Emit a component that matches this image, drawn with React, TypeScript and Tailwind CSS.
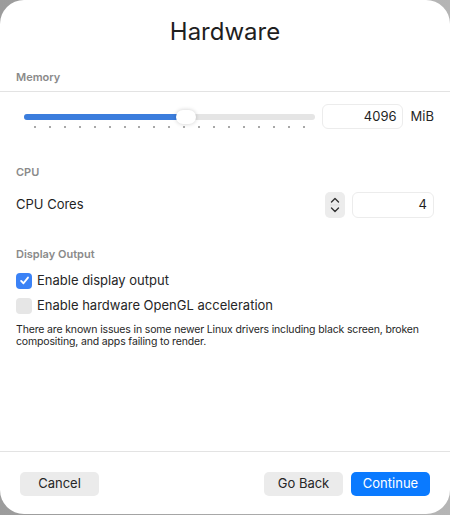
import React, { useState } from "react";

const font = { fontFamily: "Inter, 'Noto Sans', sans-serif" };

const Check = ({ checked, label }: { checked: boolean; label: string }) => (
  <label className="flex items-center gap-[5px] h-[18px] text-[13px] text-[#262626]">
    <span
      className={
        checked
          ? "w-4 h-4 rounded-[4px] bg-[#3b82f6] flex items-center justify-center"
          : "w-4 h-4 rounded-[4px] bg-[#e6e6e6]"
      }
    >
      {checked && (
        <svg width="11" height="11" viewBox="0 0 12 12" fill="none">
          <path d="M2.3 6.4 L4.9 9 L9.8 2.8" stroke="white" strokeWidth="2" strokeLinecap="round" strokeLinejoin="round" />
        </svg>
      )}
    </span>
    {label}
  </label>
);

const SectionTitle = ({ children }: { children: React.ReactNode }) => (
  <div className="text-[11px] font-semibold text-[#8a8a8a] px-4">{children}</div>
);

export default function App() {
  const [mem] = useState(4096);
  const ticks = Array.from({ length: 19 });

  return (
    <div className="w-[450px] h-[515px] bg-gradient-to-r from-[#9c9c9c] to-[#b5b5b5]" style={font}>
      <div className="w-[450px] h-[514px] bg-white rounded-[24px] flex flex-col">
        <h1 className="text-[24px] text-[#1f1f1f] text-center pt-[17px] leading-[30px]">Hardware</h1>

        <div className="mt-[22px]">
          <SectionTitle>Memory</SectionTitle>
          <div className="h-px bg-[#e3e3e3] mt-[5px]" />
        </div>

        {/* memory slider */}
        <div className="flex items-center pl-6 pr-4 mt-[12px]">
          <div className="w-[291px] relative h-[26px]">
            <div className="absolute left-0 right-0 top-[10px] h-[6px] rounded-full bg-[#e5e5e5]" />
            <div className="absolute left-0 w-[162px] top-[10px] h-[6px] rounded-full bg-[#3b7ddd]" />
            <div className="absolute left-[152px] top-[6px] w-[20px] h-[14px] rounded-full bg-white shadow-[0_0_4px_rgba(0,0,0,0.2)]" />
            <div className="absolute left-[10px] right-[10px] top-[22px] flex justify-between">
              {ticks.map((_, i) => (
                <span key={i} className="w-[2px] h-[2px] bg-[#a8a8a8]" />
              ))}
            </div>
          </div>
          <div className="ml-[7px] w-[81px] h-[25px] rounded-[6px] border border-[#ececec] text-[13px] text-[#1f1f1f] flex items-center justify-end pr-[5px]">
            {mem}
          </div>
          <span className="ml-[8px] text-[13px] text-[#262626]">MiB</span>
        </div>

        <div className="mt-[34px]">
          <SectionTitle>CPU</SectionTitle>
        </div>
        <div className="flex items-center px-4 mt-[12px]">
          <span className="text-[13px] text-[#1f1f1f] flex-1">CPU Cores</span>
          <div className="w-[20px] h-[26px] rounded-[5px] bg-[#ececec] flex flex-col items-center justify-center">
            <svg width="12" height="22" viewBox="0 0 12 22" fill="none">
              <path d="M2.5 8 L6 4.5 L9.5 8" stroke="#333" strokeWidth="1.4" strokeLinecap="round" strokeLinejoin="round" />
              <path d="M1 11 H11" stroke="#dcdcdc" strokeWidth="0.8" />
              <path d="M2.5 14 L6 17.5 L9.5 14" stroke="#333" strokeWidth="1.4" strokeLinecap="round" strokeLinejoin="round" />
            </svg>
          </div>
          <div className="ml-[7px] w-[82px] h-[26px] rounded-[6px] border border-[#ececec] text-[13px] text-[#1f1f1f] flex items-center justify-end pr-[6px]">
            4
          </div>
        </div>

        <div className="mt-[28px]">
          <SectionTitle>Display Output</SectionTitle>
        </div>
        <div className="px-4 mt-[9px] flex flex-col gap-[7px]">
          <Check checked label="Enable display output" />
          <Check checked={false} label="Enable hardware OpenGL acceleration" />
        </div>
        <p className="px-4 mt-[9px] text-[10.5px] tracking-[-0.15px] leading-[12px] text-[#262626]">
          There are known issues in some newer Linux drivers including black screen, broken
          compositing, and apps failing to render.
        </p>

        <div className="flex-1" />
        <div className="h-px bg-[#e3e3e3]" />
        <div className="flex items-center px-5 pt-[20px] pb-[18px]">
          <button className="w-[79px] h-[24px] rounded-[5px] bg-[#ebebeb] text-[13px] text-[#262626]">Cancel</button>
          <div className="flex-1" />
          <button className="w-[79px] h-[24px] rounded-[5px] bg-[#ebebeb] text-[13px] text-[#262626]">Go Back</button>
          <button className="ml-[8px] w-[79px] h-[24px] rounded-[5px] bg-[#0a7aff] text-[13px] text-white">Continue</button>
        </div>
      </div>
    </div>
  );
}
